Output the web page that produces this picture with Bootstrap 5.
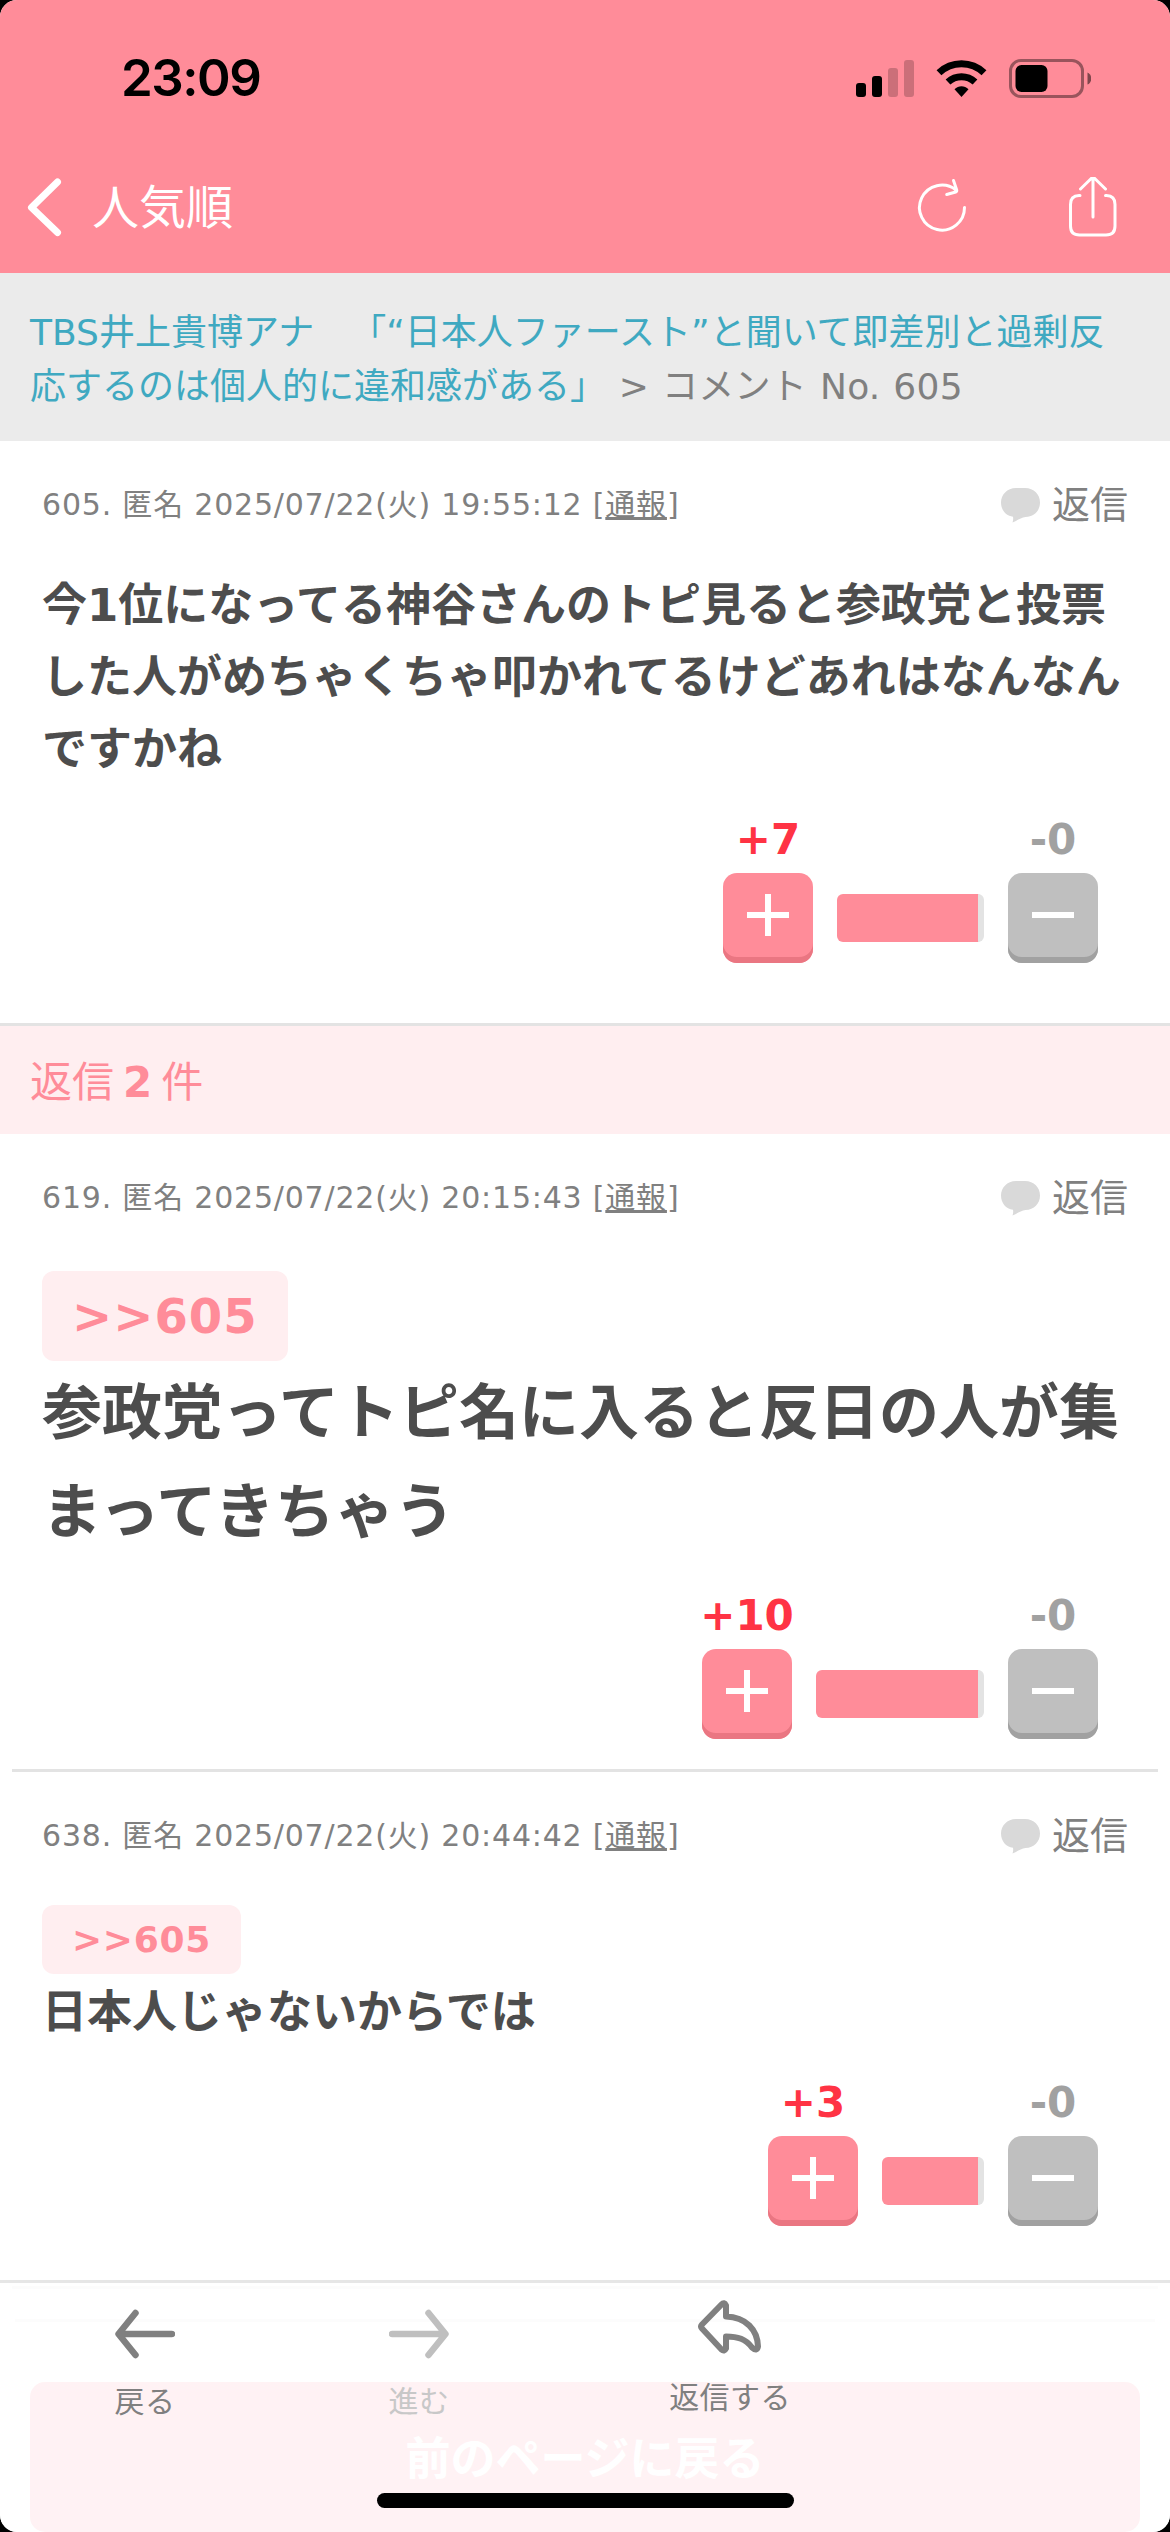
<!DOCTYPE html>
<html lang="ja">
<head>
<meta charset="utf-8">
<meta name="viewport" content="width=device-width, initial-scale=1">
<title>コメント No. 605</title>
<link rel="stylesheet" href="https://cdn.jsdelivr.net/npm/bootstrap@5.3.0/dist/css/bootstrap.min.css">
<style>
:root { --pink: #ff8c99; --pale: #ffeef0; --ink: #4d4d4d; --dim: #808080; }
body { background: #000; font-family: "DejaVu Sans", "Noto Sans CJK JP", sans-serif; color: var(--dim); text-spacing-trim: space-all; }
svg { display: block; flex: none; }
.screen { width: 1170px; height: 2532px; border-radius: 17px; background: #fff; }
.topbar { background: var(--pink); height: 273px; }
.statusbar { height: 157px; padding: 0 79px 0 121px; }
.clock { font: 600 51px/60px Inter, sans-serif; color: #000; letter-spacing: -1.5px; padding-bottom: 1px; }
.navrow { height: 100px; padding: 0 51px 0 27px; }
.navtitle { font-size: 47px; line-height: 60px; font-family: "Noto Sans CJK JP", sans-serif; margin-left: 29px; padding-bottom: 6px; }
.crumbs { background: #ebebeb; padding: 33px 30px 27px; font-size: 36px; line-height: 54px; }
.crumbs a { color: #3fa9c1; }
.crumb-tail { letter-spacing: .3px; word-spacing: 1px; }
.entry { padding: 40px 42px 60px; }
.entry-mid { padding-bottom: 30px; }
.meta { height: 48px; font-size: 30px; line-height: 48px; letter-spacing: .8px; }
.reply-link { font-size: 38px; gap: 12px; letter-spacing: 0; }
.words { color: var(--ink); font-weight: 700; font-size: 45px; line-height: 72px; padding-top: 3px; margin-bottom: -3px; }
.words-lg { font-size: 60px; line-height: 99px; }
.anchor-tag { display: block; width: max-content; background: var(--pale); color: var(--pink); font-weight: 700; border-radius: 12px; padding: 0 30px; font-size: 36px; line-height: 69px; letter-spacing: .7px; }
.anchor-lg { font-size: 48px; line-height: 90px; letter-spacing: 1px; }
.votes { margin-top: 36px; padding-right: 30px; gap: 24px; }
.tally { width: 90px; gap: 12px; font-size: 42px; font-weight: 700; line-height: 42px; }
.up { color: #ff3344; }
.down { color: #a1a1a1; }
.votebtn { width: 90px; height: 90px; border: 0; padding: 0 0 6px; border-radius: 14px; }
.up .votebtn { background: var(--pink); box-shadow: inset 0 -6px #ea7682; }
.down .votebtn { background: #bfbfbf; box-shadow: inset 0 -6px #a1a1a1; }
.meter { height: 48px; border-radius: 6px; margin-bottom: 21px; background: var(--pink); border-right: 6px solid #e3e3e3; }
.rule { height: 3px; background: #e3e3e3; }
.replies { height: 108px; padding: 5px 0 0 30px; background: var(--pale); color: var(--pink); font-size: 42px; gap: 9px; }
.backbtn { margin: 60px 30px 0; height: 150px; border-radius: 15px; background: var(--pink); color: #fff; font-weight: 700; font-size: 45px; line-height: 156px; }
.toolbar { height: 252px; background: rgba(255,255,255,.89); border-top: 3px solid #e6e6e6; padding: 17px 0 0 85px; }
.tool { width: 120px; font-size: 30px; line-height: 40px; color: var(--dim); letter-spacing: .4px; }
.homebar { width: 417px; height: 15px; border-radius: 8px; background: #000; bottom: 24px; left: 377px; }
</style>
</head>
<body>
<svg width="0" height="0" class="position-absolute" aria-hidden="true">
  <symbol id="bubble" viewBox="0 0 39 35"><path fill="#d9d9d9" d="M15 0h9c9 0 15 6.500 15 14.500S33 29 24.500 29c-4.500.5-8 3.500-13 5.500.8-2 .8-4 .5-5.800C5 28 0 22 0 14.500S6 0 15 0z"/></symbol>
  <symbol id="plus" viewBox="0 0 42 42"><path stroke="#fff" stroke-width="6" d="M0 21h42M21 0v42"/></symbol>
  <symbol id="minus" viewBox="0 0 42 42"><path stroke="#fff" stroke-width="6" d="M0 21h42"/></symbol>
</svg>
<div class="screen position-relative overflow-hidden">
  <header class="topbar">
    <div class="statusbar d-flex align-items-center justify-content-between">
      <span class="clock">23:09</span>
      <svg width="235" height="39" viewBox="0 0 235 39">
        <g><rect x="0" y="24" width="10" height="14" rx="3"/><rect x="16" y="17" width="10" height="21" rx="3"/>
        <g opacity=".2"><rect x="32" y="9" width="10" height="29" rx="3"/><rect x="48" y="1" width="10" height="37" rx="3"/></g></g>
        <g fill="none" stroke="#000" stroke-width="7"><path d="M83 13.800a32.500 32.500 0 0 1 45 0"/><path d="M92 23a20 20 0 0 1 27 0"/></g>
        <path d="M98.500 30.300c4-4 10-4 14 0l-7 7.700z"/>
        <rect x="154.500" y="1.500" width="72" height="36" rx="10.500" fill="none" stroke="#000" stroke-opacity=".4" stroke-width="3"/>
        <rect x="159.500" y="6" width="32" height="27" rx="6"/>
        <path d="M231.500 13.500c5 2 5 10 0 12z" opacity=".5"/>
      </svg>
    </div>
    <nav class="navrow d-flex align-items-center text-white">
      <svg width="36" height="60" viewBox="0 0 36 60" fill="none" stroke="#fff" stroke-width="7" stroke-linecap="round" stroke-linejoin="round"><path d="M30.500 5L4.500 30.500l26 25"/></svg>
      <span class="navtitle">人気順</span>
      <svg class="ms-auto" width="54" height="60" viewBox="0 0 54 60" fill="none" stroke="#fff" stroke-width="3" stroke-linecap="round" stroke-linejoin="round"><path d="M49.500 30.500A22.500 22.500 0 1 1 41 13M38.500 3.500l3.200 9.500q.3 1.500-1 2l-9 2.500"/></svg>
      <svg style="margin-left:96px" width="54" height="60" viewBox="0 0 54 60" fill="none" stroke="#fff" stroke-width="3" stroke-linecap="round" stroke-linejoin="round"><path d="M15 18.500h-1q-8.500 0-8.500 9V49q0 9 9 9h26.500q9 0 9-9V27.500q0-9-8.500-9h-1M28 40V1M15.500 12L27 .8q1-.8 2 0L40.500 12"/></svg>
    </nav>
  </header>

  <div class="crumbs"><a class="text-decoration-none" href="#">TBS井上貴博アナ　「“日本人ファースト”と聞いて即差別と過剰反<br>応するのは個人的に違和感がある」</a><span class="crumb-tail"> &gt; コメント No. 605</span></div>

  <main>
    <article class="entry">
      <div class="meta d-flex align-items-center justify-content-between">
        <span>605. 匿名 2025/07/22(火) 19:55:12 [<u>通報</u>]</span>
        <span class="reply-link d-flex align-items-center"><svg width="39" height="35"><use href="#bubble"/></svg>返信</span>
      </div>
      <div class="words" style="margin-top:38px">今1位になってる神谷さんのトピ見ると参政党と投票<br>した人がめちゃくちゃ叩かれてるけどあれはなんなん<br>ですかね</div>
      <div class="votes d-flex justify-content-end align-items-end">
        <div class="tally up d-flex flex-column align-items-center"><span>+7</span><button class="votebtn d-flex align-items-center justify-content-center"><svg width="42" height="42"><use href="#plus"/></svg></button></div>
        <div class="meter" style="width:147px"></div>
        <div class="tally down d-flex flex-column align-items-center"><span>-0</span><button class="votebtn d-flex align-items-center justify-content-center"><svg width="42" height="42"><use href="#minus"/></svg></button></div>
      </div>
    </article>
    <div class="rule"></div>
    <div class="replies d-flex align-items-center"><span>返信</span><b>2</b><span>件</span></div>

    <article class="entry entry-mid">
      <div class="meta d-flex align-items-center justify-content-between">
        <span>619. 匿名 2025/07/22(火) 20:15:43 [<u>通報</u>]</span>
        <span class="reply-link d-flex align-items-center"><svg width="39" height="35"><use href="#bubble"/></svg>返信</span>
      </div>
      <span class="anchor-tag anchor-lg" style="margin-top:49px">&gt;&gt;605</span>
      <div class="words words-lg">参政党ってトピ名に入ると反日の人が集<br>まってきちゃう</div>
      <div class="votes d-flex justify-content-end align-items-end">
        <div class="tally up d-flex flex-column align-items-center"><span>+10</span><button class="votebtn d-flex align-items-center justify-content-center"><svg width="42" height="42"><use href="#plus"/></svg></button></div>
        <div class="meter" style="width:168px"></div>
        <div class="tally down d-flex flex-column align-items-center"><span>-0</span><button class="votebtn d-flex align-items-center justify-content-center"><svg width="42" height="42"><use href="#minus"/></svg></button></div>
      </div>
    </article>
    <div class="rule" style="margin:0 12px"></div>

    <article class="entry">
      <div class="meta d-flex align-items-center justify-content-between">
        <span>638. 匿名 2025/07/22(火) 20:44:42 [<u>通報</u>]</span>
        <span class="reply-link d-flex align-items-center"><svg width="39" height="35"><use href="#bubble"/></svg>返信</span>
      </div>
      <span class="anchor-tag" style="margin-top:45px">&gt;&gt;605</span>
      <div class="words">日本人じゃないからでは</div>
      <div class="votes d-flex justify-content-end align-items-end">
        <div class="tally up d-flex flex-column align-items-center"><span>+3</span><button class="votebtn d-flex align-items-center justify-content-center"><svg width="42" height="42"><use href="#plus"/></svg></button></div>
        <div class="meter" style="width:102px"></div>
        <div class="tally down d-flex flex-column align-items-center"><span>-0</span><button class="votebtn d-flex align-items-center justify-content-center"><svg width="42" height="42"><use href="#minus"/></svg></button></div>
      </div>
    </article>
    <div class="rule" style="margin:0 12px"></div>
    <div class="rule" style="margin:30px 15px 0"></div>
    <div class="backbtn text-center">前のページに戻る</div>
  </main>

  <footer class="toolbar d-flex align-items-start position-absolute start-0 bottom-0 w-100">
    <div class="tool d-flex flex-column align-items-center">
      <svg width="60" height="68" viewBox="0 0 60 68" fill="none" stroke="#808080" stroke-width="6.500" stroke-linecap="round" stroke-linejoin="round"><path d="M57 34H4M20.500 13L3.500 34l17 21"/></svg>
      <span style="margin-top:14px">戻る</span>
    </div>
    <div class="tool d-flex flex-column align-items-center" style="margin-left:154px;color:#c8c8c8">
      <svg width="60" height="68" viewBox="0 0 60 68" fill="none" stroke="#bfbfbf" stroke-width="6.500" stroke-linecap="round" stroke-linejoin="round"><path d="M3 34h53M39.500 13l17 21-17 21"/></svg>
      <span style="margin-top:14px">進む</span>
    </div>
    <div class="tool d-flex flex-column align-items-center text-nowrap" style="margin-left:191px">
      <svg width="64" height="68" viewBox="0 0 64 68" fill="none" stroke="#808080" stroke-width="6" stroke-linecap="round" stroke-linejoin="round"><path d="M28 16.500V5.500q-1.700-4-4.500-1L4 24.500q-1.800 2 0 4l19.500 21q2.800 2.500 4.500-1V36.500c12 0 19.500 2.500 26 11q5 4.500 6-1C59.500 30 48 17 28 16.500z"/></svg>
      <span style="margin-top:10px">返信する</span>
    </div>
  </footer>
  <div class="homebar position-absolute"></div>
</div>
<script src="https://cdn.jsdelivr.net/npm/bootstrap@5.3.0/dist/js/bootstrap.bundle.min.js"></script>
</body>
</html>
